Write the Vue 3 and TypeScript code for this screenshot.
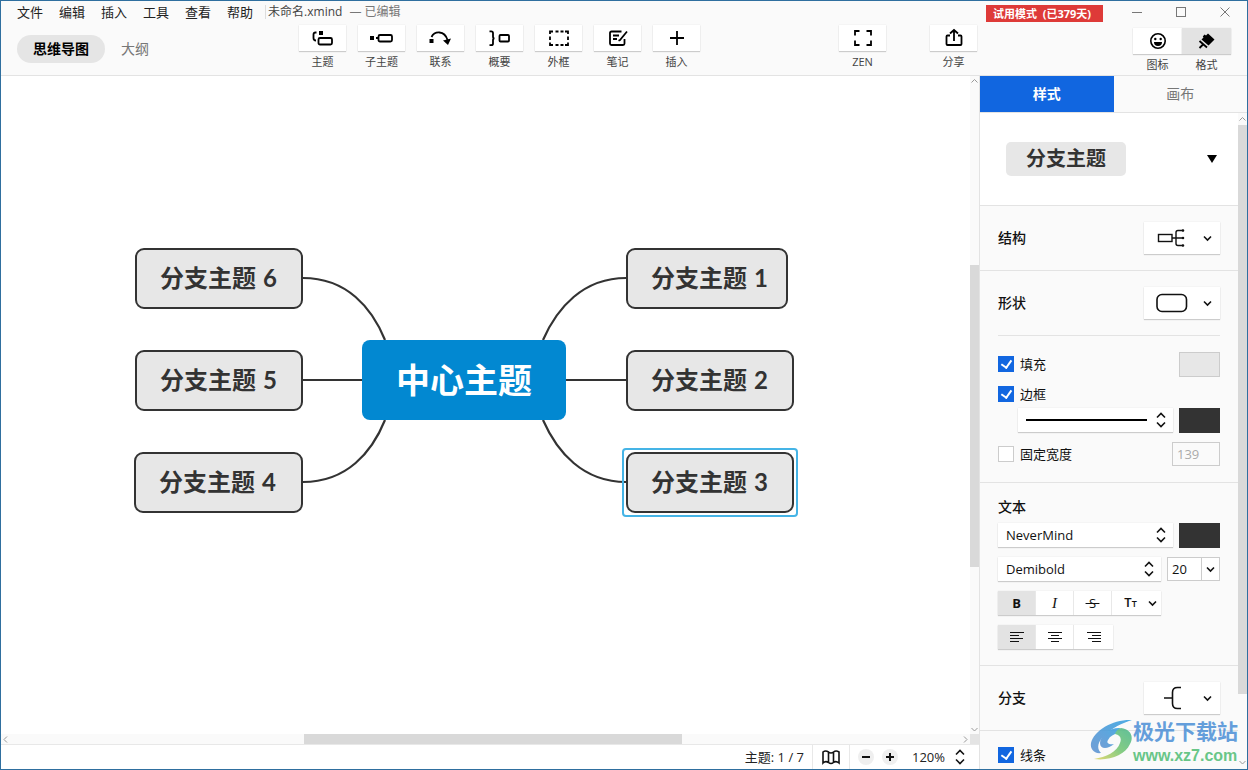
<script setup lang="ts">
import { ref } from 'vue'

interface Tool { id: string; label: string }
interface TopicNode { id: string; text: string; no: number; x: number; y: number; w: number }

const menus = ['文件', '编辑', '插入', '工具', '查看', '帮助']

const tools: Tool[] = [
  { id: 'topic', label: '主题' },
  { id: 'subtopic', label: '子主题' },
  { id: 'relation', label: '联系' },
  { id: 'summary', label: '概要' },
  { id: 'boundary', label: '外框' },
  { id: 'note', label: '笔记' },
  { id: 'insert', label: '插入' },
]

const nodes: TopicNode[] = [
  { id: 'n6', text: '分支主题', no: 6, x: 134, y: 172, w: 168 },
  { id: 'n5', text: '分支主题', no: 5, x: 134, y: 274, w: 168 },
  { id: 'n4', text: '分支主题', no: 4, x: 133, y: 376, w: 169 },
  { id: 'n1', text: '分支主题', no: 1, x: 625, y: 172, w: 162 },
  { id: 'n2', text: '分支主题', no: 2, x: 625, y: 274, w: 168 },
  { id: 'n3', text: '分支主题', no: 3, x: 625, y: 376, w: 168 },
]

const selected = ref('n3')
const fill = ref(true)
const border = ref(true)
const fixedWidth = ref(false)
const line = ref(true)
const width = ref('139')
const fontSize = ref('20')
</script>

<template>
  <div class="window">
    <header class="header">
      <div class="titlebar">
        <nav class="menus">
          <button v-for="m in menus" :key="m" type="button">{{ m }}</button>
        </nav>
        <div class="doc"><span>未命名.xmind</span><span class="state">— 已编辑</span></div>
        <span class="trial">试用模式&nbsp; (已379天)</span>
        <div class="winctl">
          <button type="button" aria-label="最小化"><svg width="12" height="12"><path d="M1 6.500h10" /></svg></button>
          <button type="button" aria-label="最大化"><svg width="12" height="12"><rect x="1.500" y="1.500" width="9" height="9" /></svg></button>
          <button type="button" aria-label="关闭"><svg width="12" height="12"><path d="M1.500 1.500l9 9M10.500 1.500l-9 9" /></svg></button>
        </div>
      </div>

      <div class="toolbar">
        <div class="views">
          <button type="button" class="view on">思维导图</button>
          <button type="button" class="view">大纲</button>
        </div>
        <div class="tools">
          <button v-for="t in tools" :key="t.id" type="button" class="tool">
            <span class="tile">
              <svg width="24" height="24" viewBox="0 0 24 24" class="ico">
                <g v-if="t.id === 'topic'">
                  <rect x="8" y="5" width="4" height="4" class="solid" />
                  <path d="M5.500 6.500H4.500Q2.500 6.500 2.500 8.500v3.500Q2.500 14.500 5 14.500" />
                  <rect x="7.500" y="12" width="13.500" height="6.500" rx="1.500" />
                </g>
                <g v-else-if="t.id === 'subtopic'">
                  <rect x="0" y="10" width="4" height="4" class="solid" />
                  <path d="M6 12h2" /><rect x="8.500" y="9" width="13.500" height="6.500" rx="1.500" />
                </g>
                <g v-else-if="t.id === 'relation'">
                  <rect x="0.500" y="13" width="4" height="4" class="solid" />
                  <path d="M2.500 11C5.500 5 15.500 4 18.500 14" />
                  <path d="M14 14.500l8-2-3 6.500z" class="solid" />
                </g>
                <g v-else-if="t.id === 'summary'">
                  <path d="M1.500 5.300h1.700Q5 5.300 5 7v3.500Q5 12.300 6.500 12.300 5 12.300 5 14v3.500Q5 19.200 3.200 19.200H1.500" />
                  <rect x="11.500" y="9" width="9.500" height="6.500" rx="1" />
                </g>
                <g v-else-if="t.id === 'boundary'">
                  <path d="M3 8V5.500h3M18 5.500h3V8M21 16.500V19h-3M6 19H3v-2.500M8.500 5.500h3M13.500 5.500h3M8.500 19h3M13.500 19h3M3 10.500v3.500M21 10.500v3.500" />
                </g>
                <g v-else-if="t.id === 'note'">
                  <path d="M15.500 5.500H5.500Q4 5.500 4 7v10.500Q4 19 5.500 19h11.500Q18.500 19 18.500 17.500V13M7 9.500h6M7 13h4M21 5.500L14 14l-1.500.8" />
                </g>
                <path v-else d="M12 5v14M5 12h14" />
              </svg>
            </span>
            <span>{{ t.label }}</span>
          </button>
        </div>
        <div class="actions">
          <button type="button" class="tool">
            <span class="tile"><svg width="24" height="24" viewBox="0 0 24 24" class="ico"><path d="M4 9.500V5h4.500M15.500 5H20v4.500M20 14.500V19h-4.500M8.500 19H4v-4.500" /></svg></span>
            <span>ZEN</span>
          </button>
          <button type="button" class="tool">
            <span class="tile"><svg width="24" height="24" viewBox="0 0 24 24" class="ico"><path d="M8 9.500H5.500Q4.500 9.500 4.500 10.500v7.500Q4.500 19 5.500 19h13Q19.500 19 19.500 18V10.500q0-1-1-1H16M12 15V4M8 7.500L12 4l4 3.500" /></svg></span>
            <span>分享</span>
          </button>
        </div>
        <div class="panels">
          <button type="button" class="tool">
            <span class="tile"><svg width="24" height="24" viewBox="0 0 24 24" class="ico face"><circle cx="12" cy="12" r="7.200" /><circle cx="9.300" cy="10" r="1.200" class="solid" /><circle cx="14.700" cy="10" r="1.200" class="solid" /><path d="M8 13h8a4 4 0 0 1-8 0z" class="solid" /></svg></span>
            <span>图标</span>
          </button>
          <button type="button" class="tool on">
            <span class="tile"><svg width="24" height="24" viewBox="0 0 24 24" class="ico"><path d="M9.500 5.500L11 6.500 13 4.500 19.500 10.500 13.500 16.500 6.500 10.500 8.500 8.500 7.800 7.500z" class="solid" /><path d="M4.500 12l7.500 6.500M8.500 15l-4 4" /></svg></span>
            <span>格式</span>
          </button>
        </div>
      </div>
    </header>

    <div class="body">
      <main class="work">
        <div class="canvas">
          <svg class="links" width="800" height="520" viewBox="0 0 800 520">
            <path d="M302 202C346 202 371 232 384 264M302 304H361M302 406C346 406 371 376 384 344M625 202C582 202 556 232 542 264M565 304H625M625 406C582 406 556 376 542 344" />
          </svg>
          <div class="center">中心主题</div>
          <div
            v-for="n in nodes"
            :key="n.id"
            class="node"
            :class="{ sel: n.id === selected }"
            :style="{ left: n.x + 'px', top: n.y + 'px', width: n.w + 'px' }"
            @click="selected = n.id"
          ><span>{{ n.text }}</span> <span>{{ n.no }}</span></div>
        </div>
        <div class="vbar">
          <svg width="9" height="9"><path d="M1.500 6.500l3-3 3 3" /></svg>
          <div class="vtrack"><i></i></div>
          <svg width="9" height="9"><path d="M1.500 3l3 3 3-3" /></svg>
        </div>
        <div class="hbar">
          <svg width="9" height="9"><path d="M6 1.500l-3 3 3 3" /></svg>
          <div class="htrack"><i></i></div>
          <svg width="9" height="9"><path d="M3 1.500l3 3-3 3" /></svg>
        </div>
        <div class="corner"></div>
        <footer class="status">
          <span>主题: 1 / 7</span>
          <button type="button" class="map" aria-label="导航图">
            <svg width="20" height="18" viewBox="0 0 20 18"><path d="M2 4Q4.500 2 7.500 4 10 6 12.500 4 15 2 18 4V15Q15 12.500 12.500 14.500 10 16.500 7.500 14.500 4.500 12.500 2 15ZM7.500 4v10.500M12.500 4v10.500" /></svg>
          </button>
          <button type="button" class="zoom" aria-label="缩小"><svg width="16" height="16"><path d="M4 8h8" /></svg></button>
          <button type="button" class="zoom" aria-label="放大"><svg width="16" height="16"><path d="M4 8h8M8 4v8" /></svg></button>
          <div class="picker level">
            <select aria-label="缩放比例"><option>120%</option></select>
            <svg width="10" height="16" viewBox="0 0 10 16"><path d="M1 5.500L5 1.500 9 5.500M1 10.500L5 14.500 9 10.500" /></svg>
          </div>
        </footer>
      </main>

      <aside class="side">
        <div class="tabs">
          <button type="button" class="on">样式</button>
          <button type="button">画布</button>
        </div>
        <div class="sidebody">
          <div class="panel">
            <section class="preview">
              <button type="button" class="sample">分支主题</button>
              <button type="button" class="tri" aria-label="更多样式"><svg width="10" height="8"><path d="M0 0h10L5 8z" /></svg></button>
            </section>
            <section class="row">
              <h3>结构</h3>
              <button type="button" class="drop" aria-label="结构">
                <svg width="32" height="20" viewBox="0 0 32 20" class="thin"><rect x="2.500" y="6.500" width="13.500" height="7" /><path d="M16 10h11M27 2.500h-5q-2 0-2 2v11q0 2 2 2h5" /><circle cx="27" cy="2.500" r="0.600" /><circle cx="27" cy="10" r="0.600" /><circle cx="27" cy="17.500" r="0.600" /></svg>
                <svg width="9" height="7" viewBox="0 0 9 7"><path d="M1 1.500l3.500 3.500L8 1.500" /></svg>
              </button>
            </section>
            <section class="row plain">
              <h3>形状</h3>
              <button type="button" class="drop" aria-label="形状">
                <svg width="32" height="20" viewBox="0 0 32 20"><rect x="1" y="1.500" width="29.500" height="17" rx="5" /></svg>
                <svg width="9" height="7" viewBox="0 0 9 7"><path d="M1 1.500l3.500 3.500L8 1.500" /></svg>
              </button>
            </section>
            <section class="shape bordered">
              <div class="line first">
                <label><input v-model="fill" type="checkbox">填充</label>
                <button type="button" class="swatch light" aria-label="填充颜色"></button>
              </div>
              <div class="line short">
                <label><input v-model="border" type="checkbox">边框</label>
              </div>
              <div class="line indent">
                <button type="button" class="picker stroke" aria-label="边框线型">
                  <i></i>
                  <svg width="10" height="16" viewBox="0 0 10 16"><path d="M1 5.500L5 1.500 9 5.500M1 10.500L5 14.500 9 10.500" /></svg>
                </button>
                <button type="button" class="swatch dark" aria-label="边框颜色"></button>
              </div>
              <div class="line last">
                <label><input v-model="fixedWidth" type="checkbox">固定宽度</label>
                <input v-model="width" class="num" type="text" aria-label="宽度" disabled>
              </div>
            </section>
            <section class="text">
              <h3>文本</h3>
              <div class="line">
                <div class="picker grow">
                  <select aria-label="字体"><option>NeverMind</option></select>
                  <svg width="10" height="16" viewBox="0 0 10 16"><path d="M1 5.500L5 1.500 9 5.500M1 10.500L5 14.500 9 10.500" /></svg>
                </div>
                <button type="button" class="swatch dark" aria-label="文字颜色"></button>
              </div>
              <div class="line">
                <div class="picker grow">
                  <select aria-label="字重"><option>Demibold</option></select>
                  <svg width="10" height="16" viewBox="0 0 10 16"><path d="M1 5.500L5 1.500 9 5.500M1 10.500L5 14.500 9 10.500" /></svg>
                </div>
                <div class="combo">
                  <input v-model="fontSize" type="text" aria-label="字号">
                  <button type="button" aria-label="选择字号"><svg width="9" height="7" viewBox="0 0 9 7"><path d="M1 1.500l3.500 3.500L8 1.500" /></svg></button>
                </div>
              </div>
              <div class="seg">
                <button type="button" class="on b">B</button>
                <button type="button" class="i">I</button>
                <button type="button" class="s">&nbsp;S&nbsp;</button>
                <button type="button" class="tt"><span>T<small>T</small></span><svg width="9" height="7" viewBox="0 0 9 7"><path d="M1 1.500l3.500 3.500L8 1.500" /></svg></button>
              </div>
              <div class="seg">
                <button type="button" class="on" aria-label="左对齐"><svg width="16" height="12" class="al"><path d="M1 1.500h14M1 4.500h9M1 7.500h13M1 10.500h9" /></svg></button>
                <button type="button" aria-label="居中对齐"><svg width="16" height="12" class="al"><path d="M1 1.500h14M4 4.500h8M1 7.500h14M4 10.500h8" /></svg></button>
                <button type="button" aria-label="右对齐"><svg width="16" height="12" class="al"><path d="M1 1.500h14M6 4.500h9M2 7.500h13M6 10.500h9" /></svg></button>
              </div>
            </section>
            <section class="row">
              <h3>分支</h3>
              <button type="button" class="drop" aria-label="分支">
                <svg width="32" height="24" viewBox="0 0 32 24"><path d="M8 12h8.500M25 1.500h-3.500Q16.500 1.500 16.500 6.500v11Q16.500 22.500 21.500 22.500H25" /></svg>
                <svg width="9" height="7" viewBox="0 0 9 7"><path d="M1 1.500l3.500 3.500L8 1.500" /></svg>
              </button>
            </section>
            <section class="shape">
              <div class="line branch">
                <label><input v-model="line" type="checkbox">线条</label>
              </div>
            </section>
          </div>
          <div class="sbar">
            <svg width="9" height="12"><path d="M1.500 7.500l3-3 3 3" /></svg>
            <div class="strack"><i></i></div>
            <svg width="9" height="12"><path d="M1.500 4l3 3 3-3" /></svg>
          </div>
        </div>
      </aside>
    </div>

    <div class="mark">
      <svg width="42" height="42" viewBox="0 0 42 42">
        <defs>
          <linearGradient id="swirlA" x1="1" y1="0" x2="0" y2="1"><stop offset="0" stop-color="#2f9fe0" /><stop offset="1" stop-color="#5a8fd0" /></linearGradient>
          <linearGradient id="swirlB" x1="1" y1="0" x2="0" y2="1"><stop offset="0" stop-color="#45b58a" /><stop offset="0.500" stop-color="#6fc470" /><stop offset="1" stop-color="#e2d45c" /></linearGradient>
        </defs>
        <path d="M42 1C24 0 4 11 1 24c-1 6 3 11 10 10-5-5-3-12 4-18C22 9 32 4 42 1z" fill="url(#swirlA)" />
        <path d="M29 9C19 9 10 17 10 24c0 6 7 7 14 1-5 1-8-1-6-4 2-4 6-6 10-7 4-1 4-5 1-5z" fill="url(#swirlA)" />
        <path d="M31 9c10 1 13 9 9 16-5 11-20 17-36 15 12-2 23-7 26-16 2-5 0-8-5-9 1-3 3-5 6-6z" fill="url(#swirlB)" />
      </svg>
      <div><b>极光下载站</b><span>www.xz7.com</span></div>
    </div>
  </div>
</template>

<style>
body { background: #fff; }
</style>

<style scoped>
* { box-sizing: border-box; }
button, input, select { font: inherit; color: inherit; background: none; border: 0; padding: 0; margin: 0; border-radius: 0; }
svg { display: block; fill: none; stroke: #111; stroke-width: 1.6; flex: none; }
.window {
  position: relative; display: flex; flex-direction: column; height: 100vh; overflow: hidden;
  border: 1px solid #2f6f9f; background: #fff; color: #111;
  font: 13px/18px "Open Sans", "Noto Sans CJK SC", sans-serif;
}
.header { flex: none; height: 75px; background: #fafafa; border-bottom: 1px solid #e3e3e3; }
.titlebar { display: flex; align-items: center; height: 23px; padding: 0 16px 2px; }
.menus { display: flex; gap: 16px; color: #222; }
.doc { display: flex; gap: 7px; margin-left: 12px; padding-left: 2px; border-left: 1px solid #ddd; line-height: 14px; font-size: 12px; color: #444; white-space: nowrap; }
.state { color: #777; }
.trial { margin: 4px 0 0 auto; padding: 0 12px 0 7px; background: #de3a38; color: #fff; font-size: 11px; font-weight: 700; line-height: 17px; white-space: nowrap; }
.winctl { display: flex; gap: 32px; margin-left: 28px; }
.winctl svg { stroke: #777; stroke-width: 1; }
.toolbar { display: flex; align-items: flex-start; padding-right: 16px; }
.views { display: flex; flex: 0 0 298px; padding: 11px 0 0 16px; }
.view { height: 28px; padding: 0 16px; border-radius: 14px; color: #777; font-size: 14px; }
.view.on { background: #e5e5e5; color: #000; font-weight: 700; }
.tools { display: flex; gap: 12px; padding-top: 1px; }
.actions { display: flex; gap: 44px; margin-left: auto; padding-top: 1px; }
.panels { display: flex; margin-left: 156px; padding-top: 4px; }
.tool { display: flex; flex-direction: column; align-items: center; gap: 2px; width: 47px; font-size: 11px; color: #444; }
.tile { display: flex; align-items: center; justify-content: center; width: 100%; height: 26px; background: #fff; box-shadow: 0 1px 1px #ccc, 0 0 1px #ddd; }
.ico { stroke: #000; stroke-width: 1.8; }
.ico .solid { fill: #000; stroke: none; }
.face { stroke-width: 1.6; }
.panels .tool { width: 49px; }
.panels .on .tile { background: #e3e3e3; }

.body { display: flex; flex: 1; min-height: 0; }
.work { flex: 1; min-width: 0; display: grid; grid-template-columns: 1fr 9px; grid-template-rows: 1fr 10px 25px; }
.canvas { position: relative; overflow: hidden; background: #fff; }
.links { position: absolute; left: 0; top: 0; }
.links path { stroke: #333; stroke-width: 2.2; }
.node, .center { position: absolute; display: flex; align-items: center; font-weight: 700; white-space: nowrap; }
.node { gap: 7px; height: 61px; padding: 0 0 2px 23px; border: 2px solid #333; border-radius: 9px; background: #e7e7e7; color: #333; font-family: Lato, "Noto Sans CJK SC", sans-serif; font-size: 24px; line-height: 34px; }
.center { justify-content: center; left: 361px; top: 264px; width: 204px; height: 80px; padding-bottom: 3px; border-radius: 8px; background: #0288d1; color: #fff; font-size: 34px; line-height: 48px; font-family: "Noto Sans CJK SC", sans-serif; }
.sel::after { content: ""; position: absolute; inset: -6px; border: 2px solid #45b4e6; border-radius: 4px; }
.vbar, .sbar { display: flex; flex-direction: column; background: #fafafa; }
.vbar svg, .hbar svg, .sbar svg { stroke: #999; stroke-width: 1; }
.vtrack, .strack { flex: 1; display: flex; flex-direction: column; }
.vtrack::before { content: ""; flex: 180; }
.vtrack::after { content: ""; flex: 158; }
.vtrack i { flex: 302; background: #d9d9d9; }
.hbar { display: flex; align-items: center; background: #fafafa; }
.htrack { flex: 1; display: flex; height: 100%; }
.htrack::before { content: ""; flex: 294; }
.htrack::after { content: ""; flex: 279; }
.htrack i { flex: 377; background: #d9d9d9; }
.corner { background: #e4e4e4; }
.status { grid-column: 1 / 3; display: flex; align-items: center; justify-content: flex-end; border-top: 1px solid #e8e8e8; padding-right: 13px; color: #222; }
.map { height: 100%; padding: 0 8px; margin: 0 8px; border: 1px solid #e8e8e8; border-width: 0 1px; }
.zoom { margin-right: 8px; border-radius: 8px; background: #efefef; }
.zoom svg { stroke-width: 2; }
.picker { position: relative; display: flex; align-items: center; }
.picker select { appearance: none; width: 100%; height: 100%; }
.picker svg { position: absolute; right: 7px; pointer-events: none; }
.level { width: 54px; margin-left: 6px; }
.level svg { right: 1px; }

.side { flex: 0 0 268px; display: flex; flex-direction: column; min-width: 0; border-left: 1px solid #e3e3e3; background: #fafafa; }
.tabs { display: flex; flex: none; height: 37px; border-bottom: 1px solid #e3e3e3; }
.tabs button { flex: 1; font-size: 14px; color: #777; }
.tabs .on { background: #1166e0; color: #fff; font-weight: 700; }
.sidebody { flex: 1; min-height: 0; display: flex; }
.panel { flex: 1; min-width: 0; overflow: hidden; }
.strack i { flex: 570; background: #d9d9d9; }
.strack::after { content: ""; flex: 63; }
.panel section { padding: 0 18px; }
.panel .preview { display: flex; align-items: center; justify-content: space-between; height: 93px; padding: 0 21px 0 26px; background: #fff; border-bottom: 1px solid #e3e3e3; }
.sample { width: 120px; height: 34px; border-radius: 5px; background: #e7e7e7; color: #333; font-size: 20px; font-weight: 700; line-height: 34px; }
.tri svg { fill: #000; stroke: none; }
h3 { margin: 0; font-size: 14px; line-height: 20px; font-weight: 500; font-family: "Noto Sans CJK SC", sans-serif; }
.row { display: flex; align-items: center; justify-content: space-between; height: 65px; border-bottom: 1px solid #e3e3e3; }
.row h3 { padding-bottom: 2px; }
.row.plain { height: 64px; border-bottom: 0; }
.drop { display: flex; align-items: center; justify-content: space-between; width: 76px; height: 32px; padding: 0 8px 0 12px; background: #fff; box-shadow: 0 1px 1px #ccc, 0 0 1px #ddd; }
.thin { stroke-width: 1.4; }
.line { display: flex; align-items: center; justify-content: space-between; gap: 6px; }
.shape .first { height: 57px; border-top: 1px solid #e3e3e3; }
.shape .short { height: 4px; }
.shape .indent { height: 48px; padding-left: 20px; }
.shape .last { height: 20px; }
.panel .bordered { padding-bottom: 18px; border-bottom: 1px solid #e3e3e3; }
.shape .line label { display: flex; align-items: center; gap: 6px; }
.shape input[type="checkbox"] { appearance: none; display: grid; place-items: center; width: 16px; height: 16px; border: 1px solid #ccc; background: #fff; }
.shape input[type="checkbox"]:checked { background: #1166e0; border-color: #1166e0; }
.shape input[type="checkbox"]:checked::after { content: ""; width: 5px; height: 8px; border: solid #fff; border-width: 0 2px 2px 0; transform: rotate(35deg); margin-bottom: 2px; }
.swatch { flex: none; width: 41px; height: 25px; border: 1px solid #333; background: #333; }
.swatch.light { background: #e7e7e7; border-color: #ccc; }
.stroke { flex: 1; height: 24px; padding: 0 26px 0 8px; background: #fff; box-shadow: 0 1px 1px #ccc, 0 0 1px #ddd; }
.stroke i { flex: 1; height: 2px; background: #000; }
.num { width: 48px; height: 24px; padding: 0 4px; border: 1px solid #ccc; color: #aaa; }
.panel .text { display: flex; flex-direction: column; gap: 10px; padding: 13px 18px 16px; border-bottom: 1px solid #e3e3e3; }
.text h3 { margin-bottom: -3px; }
.grow { flex: 1; height: 24px; background: #fff; box-shadow: 0 1px 1px #ccc, 0 0 1px #ddd; }
.grow select { padding-left: 8px; }
.combo { display: flex; width: 53px; height: 24px; border: 1px solid #ccc; background: #fff; }
.combo input { flex: 1; min-width: 0; padding-left: 4px; }
.combo button { width: 18px; padding-left: 4px; border-left: 1px solid #ccc; }
.text .line { height: 24px; }
.seg { display: flex; align-self: flex-start; height: 24px; background: #fff; box-shadow: 0 1px 1px #ccc, 0 0 1px #ddd; }
.seg button { display: flex; align-items: center; justify-content: center; width: 38px; border-right: 1px solid #e8e8e8; }
.seg button:last-child { width: 39px; border-right: 0; }
.seg .on { background: #e3e3e3; }
.seg .b { font-weight: 700; }
.seg .i { font-family: "Liberation Serif", serif; font-style: italic; font-size: 15px; }
.seg .s { text-decoration: line-through; }
.seg .tt:last-child { width: 49px; gap: 11px; padding-left: 8px; font-weight: 600; }
.tt small { font-size: 9px; }
.al { stroke-width: 1; }
.branch { height: 48px; }

.mark { position: absolute; right: 9px; bottom: 4px; display: flex; align-items: center; gap: 1px; opacity: 0.85; pointer-events: none; }
.mark svg { stroke: none; }
.mark div { display: flex; flex-direction: column; }
.mark b { font-size: 21px; line-height: 31px; font-weight: 700; color: #4b8fd6; font-family: "Noto Sans CJK SC", sans-serif; }
.mark span { font: bold 16px/19px "Liberation Sans", sans-serif; color: #4fbd74; }
</style>
